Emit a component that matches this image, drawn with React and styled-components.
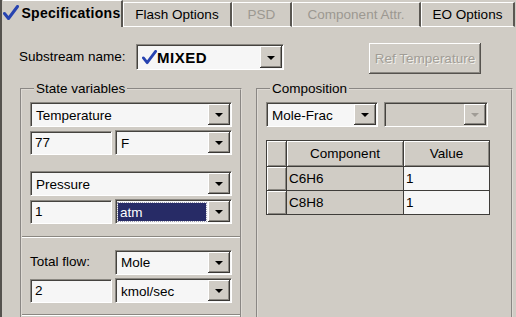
import React from 'react';
import styled, { createGlobalStyle } from 'styled-components';

const GlobalStyle = createGlobalStyle`
  html, body { margin: 0; padding: 0; background: #d0ccc5; }
  body {
    font-family: "Liberation Sans", Arial, sans-serif;
    font-size: 13px;
    color: #000;
  }
`;

const Window = styled.div`
  width: 516px;
  height: 317px;
  overflow: hidden;
  background: #d0ccc5;
  display: flex;
  flex-direction: column;
`;

const TabBar = styled.div`
  display: flex;
  height: 27px;
  align-items: flex-end;
  padding-left: 1px;
  border-left: 2px solid #55524e;
  box-sizing: border-box;
`;

const Tab = styled.div`
  width: ${p => p.w}px;
  height: ${p => (p.active ? 27 : 25)}px;
  box-sizing: border-box;
  display: flex;
  align-items: center;
  justify-content: center;
  gap: 2px;
  font-size: ${p => (p.active ? 14 : 13.5)}px;
  font-weight: ${p => (p.active ? 'bold' : 'normal')};
  letter-spacing: ${p => (p.active ? '0.3px' : '0')};
  color: ${p => (p.disabled ? '#9c9891' : '#000')};
  border-top: 1px solid #fff;
  border-left: ${p => (p.active ? 'none' : '1px solid #fff')};
  border-right: 2px solid #5a5752;
  padding-bottom: ${p => (p.active ? 2 : 0)}px;
  border-bottom: ${p => (p.active ? 'none' : '1px solid #fff')};
`;

const Body = styled.div`
  flex: 1;
  border-left: 2px solid #55524e;
  padding: 17px 0 0 17px;
  display: flex;
  flex-direction: column;
`;

const TopRow = styled.div`
  display: flex;
  align-items: flex-start;
`;

const Label = styled.span`
  width: ${p => p.w}px;
  line-height: 26px;
  font-size: 13.5px;
  flex: none;
`;

const Combo = styled.div`
  display: flex;
  width: ${p => p.w}px;
  height: ${p => p.h || 25}px;
  box-sizing: border-box;
  border: 1px solid;
  border-color: #8a8781 #fff #fff #8a8781;
  box-shadow: inset 1px 1px #45433f;
  background: ${p => (p.disabled ? '#d0ccc5' : '#f6f6f6')};
  flex: none;
`;

const ComboText = styled.div`
  flex: 1;
  display: flex;
  align-items: center;
  padding: 1px 0 0 5px;
  font-size: ${p => (p.bold ? 15 : 13.5)}px;
  font-weight: ${p => (p.bold ? 'bold' : 'normal')};
  letter-spacing: ${p => (p.bold ? '0.5px' : '0')};
`;

const Selected = styled.span`
  flex: 1;
  align-self: stretch;
  margin: 3px 2px 2px 2px;
  background: #272b66;
  color: #fff;
  outline: 1px dotted #9a9ab0;
  display: flex;
  align-items: center;
  padding-left: 2px;
  font-size: 13.5px;
`;

const ArrowButton = styled.div`
  width: 22px;
  margin: 1px 1px 1px 0;
  background: #d0ccc5;
  box-shadow: inset -1px -1px #3a3835, inset 1px 1px #fff, inset -2px -2px #8a8781;
  display: flex;
  align-items: center;
  justify-content: center;
  &::after {
    content: '';
    border-left: 4px solid transparent;
    border-right: 4px solid transparent;
    border-top: 4px solid ${p => (p.disabled ? '#a09c96' : '#000')};
    margin-top: 1px;
  }
`;

const TextBox = styled.div`
  width: ${p => p.w}px;
  height: 24px;
  box-sizing: border-box;
  border: 1px solid;
  border-color: #8a8781 #fff #fff #8a8781;
  box-shadow: inset 1px 1px #45433f;
  background: #f6f6f6;
  padding: 3px 0 0 4px;
  font-size: 13.5px;
  flex: none;
`;

const PushButton = styled.div`
  margin-left: 85px;
  margin-top: -1px;
  width: 112px;
  height: 31px;
  box-sizing: border-box;
  background: #d0ccc5;
  box-shadow: inset -1px -1px #55524e, inset 1px 1px #fff, inset -2px -2px #8a8781;
  display: flex;
  align-items: center;
  justify-content: center;
  color: #a19d96;
  font-size: 13.5px;
  text-shadow: 1px 1px #f2f0ec;
`;

const Columns = styled.div`
  display: flex;
  gap: 14px;
  margin-top: 7px;
  margin-left: 1px;
`;

const Group = styled.fieldset`
  margin: 0;
  width: ${p => p.w}px;
  box-sizing: border-box;
  border: 2px groove #dedad4;
  padding: 6px 8px 0 8px;
  display: flex;
  flex-direction: column;
  height: 260px;
`;

const Legend = styled.legend`
  padding: 0 2px;
  margin-left: 4px;
  line-height: 15px;
  font-size: 13.5px;
`;

const Row = styled.div`
  display: flex;
  align-items: center;
  gap: ${p => p.gap || 3}px;
  margin-top: ${p => p.mt || 0}px;
`;

const Divider = styled.div`
  margin: ${p => p.mt}px -8px 0 -8px;
  height: 0;
  border-top: 1px solid #8a8781;
  border-bottom: 1px solid #fff;
`;

const Grid = styled.table`
  margin-top: 13px;
  border-collapse: collapse;
  table-layout: fixed;
  width: 220px;
  font-size: 13.5px;
`;

const HeadCell = styled.th`
  width: ${p => p.w}px;
  height: 25px;
  padding: 0;
  font-weight: normal;
  background: #d0ccc5;
  border: 1px solid #3f3d3a;
  box-shadow: inset 1px 1px #fff, inset -1px -1px #8a8781;
`;

const RowHead = styled.td`
  height: 23px;
  padding: 0;
  background: #d0ccc5;
  border: 1px solid #3f3d3a;
  box-shadow: inset 1px 1px #fff, inset -1px -1px #8a8781;
`;

const Cell = styled.td`
  height: 23px;
  padding: 0 0 0 2px;
  background: ${p => (p.white ? '#f6f6f6' : '#d0ccc5')};
  border: 1px solid #3f3d3a;
`;

const Check = ({ size = 16 }) => (
  <svg width={size} height={size} viewBox="0 0 16 16">
    <path d="M1.5 8.5 L5.5 13.5 L14.5 1.5" fill="none" stroke="#2743b0" strokeWidth="3" strokeLinejoin="round" strokeLinecap="round" />
  </svg>
);

const DropDown = ({ w, children, disabled, selected, bold }) => (
  <Combo w={w} disabled={disabled}>
    {selected ? <Selected>{children}</Selected> : <ComboText bold={bold}>{children}</ComboText>}
    <ArrowButton disabled={disabled} />
  </Combo>
);

export default function App() {
  return (
    <Window>
      <GlobalStyle />
      <TabBar>
        <Tab w={120} active><Check />Specifications</Tab>
        <Tab w={109}>Flash Options</Tab>
        <Tab w={60} disabled>PSD</Tab>
        <Tab w={129} disabled>Component Attr.</Tab>
        <Tab w={94}>EO Options</Tab>
      </TabBar>
      <Body>
        <TopRow>
          <Label w={117}>Substream name:</Label>
          <Combo w={148} h={26}>
            <ComboText bold><Check size={15} />MIXED</ComboText>
            <ArrowButton />
          </Combo>
          <PushButton>Ref Temperature</PushButton>
        </TopRow>
        <Columns>
          <Group w={222}>
            <Legend>State variables</Legend>
            <DropDown w={202}>Temperature</DropDown>
            <Row mt={3}>
              <TextBox w={82}>77</TextBox>
              <DropDown w={117}>F</DropDown>
            </Row>
            <Row mt={16}>
              <DropDown w={202}>Pressure</DropDown>
            </Row>
            <Row mt={3}>
              <TextBox w={82}>1</TextBox>
              <DropDown w={117} selected>atm</DropDown>
            </Row>
            <Divider mt={12} />
            <Row mt={11}>
              <Label w={82}>Total flow:</Label>
              <DropDown w={117}>Mole</DropDown>
            </Row>
            <Row mt={3}>
              <TextBox w={82}>2</TextBox>
              <DropDown w={117}>kmol/sec</DropDown>
            </Row>
            <Divider mt={11} />
          </Group>
          <Group w={257}>
            <Legend>Composition</Legend>
            <Row gap={6}>
              <DropDown w={112}>Mole-Frac</DropDown>
              <DropDown w={104} disabled />
            </Row>
            <Grid>
              <thead>
                <tr>
                  <HeadCell w={19} />
                  <HeadCell w={116}>Component</HeadCell>
                  <HeadCell w={85}>Value</HeadCell>
                </tr>
              </thead>
              <tbody>
                <tr>
                  <RowHead />
                  <Cell>C6H6</Cell>
                  <Cell white>1</Cell>
                </tr>
                <tr>
                  <RowHead />
                  <Cell>C8H8</Cell>
                  <Cell white>1</Cell>
                </tr>
              </tbody>
            </Grid>
          </Group>
        </Columns>
      </Body>
    </Window>
  );
}
